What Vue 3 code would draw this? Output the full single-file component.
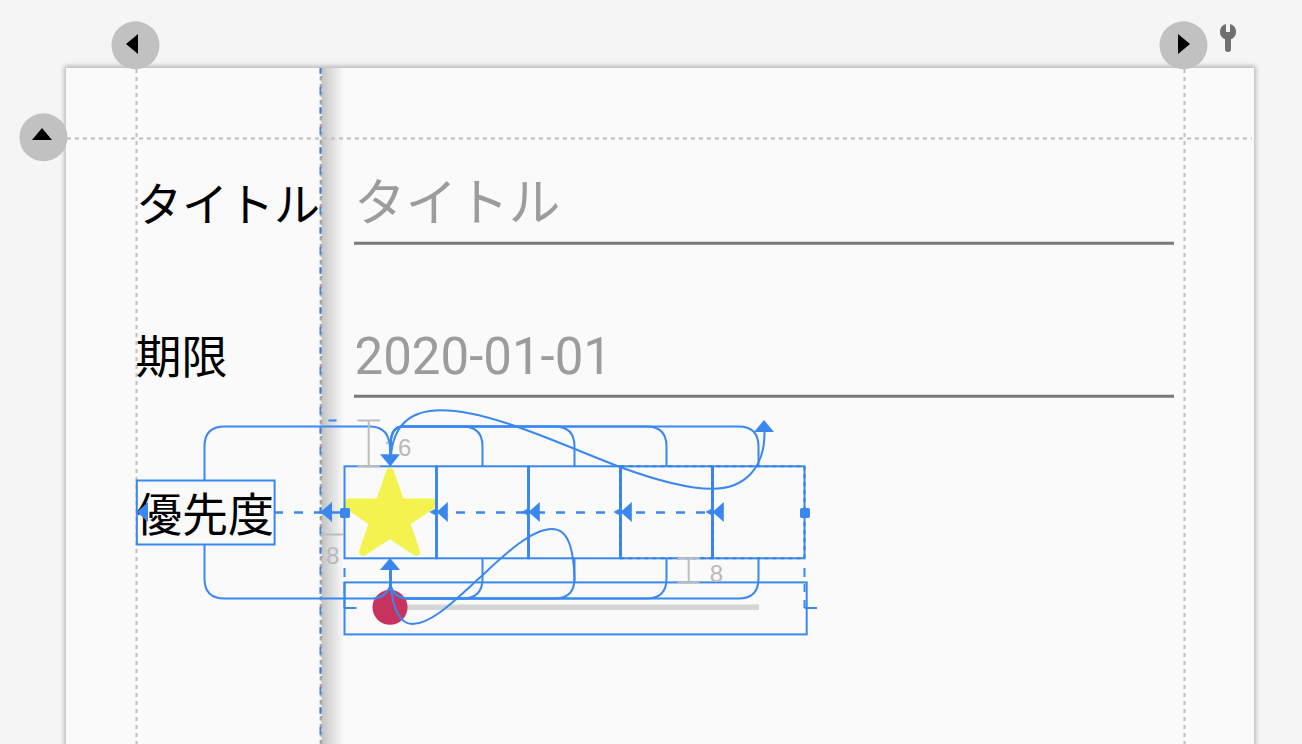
<script setup>
const cells = [344.5, 436.5, 528.5, 620.5, 712.5]
const arcs = [482.5, 574.5, 666.5, 758.5]
const handles = [345, 805]
</script>

<template>
  <main class="workspace">
    <svg class="canvas" viewBox="0 0 1302 744" width="1302" height="744">
      <defs>
        <linearGradient id="fold" x1="0" x2="1" y1="0" y2="0">
          <stop offset="0" stop-color="#000" stop-opacity=".22" />
          <stop offset=".25" stop-color="#000" stop-opacity=".16" />
          <stop offset="1" stop-color="#000" stop-opacity="0" />
        </linearGradient>
        <filter id="soft" x="-5%" y="-5%" width="110%" height="110%">
          <feGaussianBlur stdDeviation="2.8" />
        </filter>
      </defs>

      <rect class="shadow" x="64.5" y="66" width="1191" height="740" filter="url(#soft)" />
      <rect class="paper" x="66" y="68" width="1188" height="690" />
      <rect x="321.5" y="68" width="22.5" height="676" fill="url(#fold)" />

      <!-- guidelines -->
      <g class="guide">
        <path d="M136.5 69V744" />
        <path d="M1184.5 69V744" />
        <path d="M67 138.5H1252" />
      </g>
      <path class="barrier-grey" d="M320.9 68V744" />
      <path class="barrier-blue" d="M320.4 68V744" />

      <!-- form content -->
      <text class="label" x="136" y="220.5">タイトル</text>
      <text class="label" x="135.5" y="373">期限</text>
      <text class="label" x="136" y="530.5">優先度</text>
      <text class="hint" x="354" y="220.7">タイトル</text>
      <text class="hint date" x="354.5" y="374">2020-01-01</text>
      <path class="underline" d="M354 243.2H1174M354 396.2H1174" />
      <path
        class="star"
        d="M390 472L400.5 502.5H432V505L406 522.5L416 552L390 534.5L363 552L373 522.5L348 505V502.5H379.5Z"
      />
      <path class="track" d="M390 607.3H759" />
      <circle class="thumb" cx="390" cy="607.3" r="17.5" />

      <!-- constraints -->
      <g class="wire">
        <rect x="136.8" y="480.5" width="137.8" height="64" />
        <rect v-for="x in cells" :key="x" :x="x" y="466.3" width="92" height="92" />
        <rect x="344.5" y="582.4" width="462.2" height="52" />
        <path d="M204.5 480V446.5Q204.5 426.5 224.5 426.5H370Q390 426.5 390 450" />
        <path d="M204.5 545V578.5Q204.5 598.5 224.5 598.5H372Q385 598.5 390.5 586" />
        <g v-for="x in arcs" :key="x">
          <path :d="`M390.5 454V446Q390.5 426.5 403 426.5H${x - 20}Q${x} 426.5 ${x} 446.5V466`" />
          <path :d="`M390.5 570V586Q395 598.5 408 598.5H${x - 20}Q${x} 598.5 ${x} 578.5V559`" />
        </g>
        <path d="M391 456C393 428 407 410.2 441 410.2C490 410.2 560 444 620 467C650 478 685 488.8 712 488.8C745 488.8 765 468 764.5 431" />
        <path d="M391 587C393 609 400 624 412.5 624C432 624 456 599 480 577.5C500 559 530 529 552 529C568 529 574 548 574.5 582" />
        <path d="M344.5 608H356.5M804.5 608H817M328.5 420.5H336.5" />
        <path d="M344.5 568V577M344.5 582V608M804.5 568V577M804.5 584V592M804.5 600V608" />
      </g>
      <path class="thick" d="M436.5 466V559M528.5 466V559M620.5 466V559M712.5 466V559M390.5 446V456M390.5 569V587" />
      <path class="tight-dash" d="M620.5 466.3H804.5V558.3H620.5ZM712.5 466V558" />
      <path class="link" d="M274 512.5H283M294 512.5H303M314 512.5H344" />
      <path class="link long" d="M456 512.5H712" />
      <g class="solid">
        <path d="M320.5 512L332 502V522Z" />
        <path d="M137 512L148 502V522Z" />
        <template v-for="x in cells.slice(1)" :key="x">
          <path :d="`M${x} 512L${x + 11.3} 502V522Z`" />
          <path :d="`M${x - 7} 512L${x + 1} 507.5V516.5Z`" />
        </template>
        <path d="M380 454.2H400L390.3 466.5Z" />
        <path d="M380 570H400L390 558Z" />
        <path d="M754 432H774L764 420Z" />
        <rect v-for="x in handles" :key="x" :x="x - 5" y="508" width="10" height="10" rx="1.8" />
      </g>

      <!-- margins -->
      <g class="dimension">
        <path d="M357.5 420.5H380M368.7 420.5V466.3M357.5 466.3H380M677.5 558.3H699.5M688.7 558.3V582.4M677.5 582.4H699.5M321 534.5H344" />
        <text x="398" y="456">6</text>
        <path d="M385.8 443.5L388.2 442.5" />
        <text x="326" y="564">8</text>
        <text x="709.7" y="582">8</text>
      </g>

      <!-- guideline controls -->
      <g class="knob">
        <circle cx="135.5" cy="45.3" r="24" />
        <circle cx="1183.5" cy="45.3" r="24" />
        <circle cx="43.5" cy="137.3" r="24" />
      </g>
      <path d="M126 44L138 34V54ZM1190 44L1178 34V54ZM42 128L52 140H32Z" />
      <path
        class="wrench"
        d="M1226 24V32H1230V24A8.1 8.1 0 0 1 1231 39.3V49A3 3 0 0 1 1225 49V39.3A8.1 8.1 0 0 1 1226 24Z"
      />
    </svg>
  </main>
</template>

<style scoped>
.workspace { width: 1302px; height: 744px; overflow: hidden; background: #f5f5f5; }
.canvas { display: block; }
.shadow { fill: #000; opacity: .26; }
.paper { fill: #fafafa; }
.guide { fill: none; stroke: #bebebe; stroke-width: 2; stroke-dasharray: 4 4; }
.barrier-blue { stroke: #3b82e0; stroke-width: 1.8; stroke-dasharray: 7 13; stroke-dashoffset: 1; }
.barrier-grey { stroke: #a6a6a6; stroke-width: 2.4; stroke-dasharray: 4.5 3.5; }
.label { font: 46px "Noto Sans CJK JP", sans-serif; fill: #000; }
.hint { font: 51.6px "Noto Sans CJK JP", sans-serif; fill: #9c9c9c; }
.date { font-family: Roboto, sans-serif; font-size: 51px; }
.underline { stroke: #787878; stroke-width: 3; }
.star { fill: #f3f24e; stroke: #f3f24e; stroke-width: 8; stroke-linejoin: round; }
.track { stroke: #d5d5d5; stroke-width: 5.5; }
.thumb { fill: #c7325f; }
.wire { fill: none; stroke: #3b87f0; stroke-width: 2; }
.thick { stroke: #3b87f0; stroke-width: 2.8; }
.tight-dash { fill: none; stroke: #3780e4; stroke-width: 2; stroke-dasharray: 4 4; }
.link { stroke: #3b87f0; stroke-width: 2.6; }
.long { stroke-dasharray: 9 11; }
.solid { fill: #3b87f0; }
.dimension { fill: none; stroke: #bdbdbd; stroke-width: 2; }
.dimension text { font: 24px "Liberation Sans", sans-serif; fill: #b9b9b9; stroke: none; }
.knob { fill: #c1c1c1; }
.wrench { fill: #707070; }
</style>

<style>
body { background: #f5f5f5; }
</style>
